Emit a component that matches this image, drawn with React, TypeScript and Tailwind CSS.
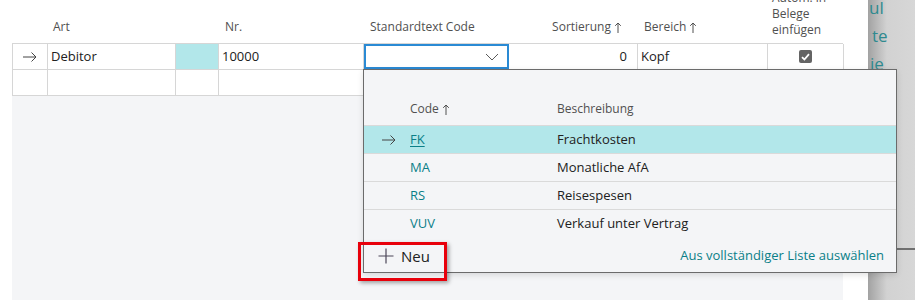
import React from "react";

const font = { fontFamily: '"Open Sans", "Noto Sans", sans-serif' };

const SortArrow = () => (
  <svg width="8" height="11" viewBox="0 0 8 11" className="ml-[3px] inline-block" fill="none" stroke="#505050" strokeWidth="1">
    <path d="M4 1v10M1.2 3.8 4 1l2.8 2.8" />
  </svg>
);

const RowArrow = () => (
  <svg width="14" height="10" viewBox="0 0 14 10" fill="none" stroke="#444" strokeWidth="1">
    <path d="M0 5h13M8.5 0.5 13 5l-4.5 4.5" />
  </svg>
);

interface Entry {
  code: string;
  text: string;
  active?: boolean;
}

const entries: Entry[] = [
  { code: "FK", text: "Frachtkosten", active: true },
  { code: "MA", text: "Monatliche AfA" },
  { code: "RS", text: "Reisespesen" },
  { code: "VUV", text: "Verkauf unter Vertrag" },
];

const Lookup = () => (
  <div className="absolute left-[363px] top-[69px] z-10 flex h-[204px] w-[534px] flex-col border border-[#6b6b6b] bg-[#f4f5f7] shadow-[0_2px_6px_rgba(0,0,0,0.12)]">
    <div className="flex h-[56px] items-end border-b border-[#dadada] pb-[7px] text-[12px] text-[#505050]">
      <div className="flex w-[193px] items-center pl-[46px]">
        Code
        <SortArrow />
      </div>
      <div>Beschreibung</div>
    </div>
    {entries.map((e, i) => (
      <div
        key={e.code}
        className={`flex h-[28px] items-center text-[13px] ${
          i < entries.length - 1 ? "border-b border-[#dadada]" : ""
        } ${e.active ? "bg-[#b2e7ea]" : ""}`}
      >
        <div className="flex w-[46px] justify-center pl-[4px]">{e.active && <RowArrow />}</div>
        <div className={`w-[147px] text-[#0a7f88] ${e.active ? "underline underline-offset-2" : ""}`}>{e.code}</div>
        <div className="text-[#212121]">{e.text}</div>
      </div>
    ))}
    <div className="flex flex-1 items-center justify-between pl-[14px] pr-[12px] pt-[2px]">
      <div className="flex items-center gap-[7px] text-[15px] text-[#212121]">
        <svg width="16" height="16" viewBox="0 0 16 16" fill="none" stroke="#4b4658" strokeWidth="1.2">
          <path d="M8 0.5v15M0.5 8h15" />
        </svg>
        Neu
      </div>
      <div className="text-[13px] text-[#0a7f88]">Aus vollständiger Liste auswählen</div>
    </div>
  </div>
);

export default function App() {
  const cell = "border-r border-[#d6d6d6] h-full flex items-center";
  return (
    <div className="flex h-[300px] w-[915px] overflow-hidden bg-white" style={font}>
      <div className="relative flex w-[868px] flex-col pl-3">
        {/* column headers */}
        <div className="grid h-[43px] grid-cols-[35px_128px_43px_145px_145px_129px_130px_76px] grid-rows-[43px] text-[12px] text-[#505050]">
          <div />
          <div className="flex items-end pb-[7px] pl-[6px]">Art</div>
          <div />
          <div className="flex items-end pb-[7px] pl-[7px]">Nr.</div>
          <div className="flex items-end pb-[7px] pl-[7px]">Standardtext Code</div>
          <div className="flex items-end justify-end pb-[7px] pr-[15px]">
            <span className="flex items-center">
              Sortierung
              <SortArrow />
            </span>
          </div>
          <div className="flex items-end pb-[7px] pl-[7px]">
            <span className="flex items-center">
              Bereich
              <SortArrow />
            </span>
          </div>
          <div className="flex min-h-0 items-end pb-[5px] pl-[5px] leading-[16px]">
            <div className="shrink-0">
              Autom. in
              <br />
              Belege
              <br />
              einfügen
            </div>
          </div>
        </div>

        {/* row 1 */}
        <div className="grid h-[26px] w-[831px] grid-cols-[35px_128px_43px_145px_145px_129px_130px_76px] border-l border-t border-[#d6d6d6] text-[13px] text-[#212121]">
          <div className={`${cell} justify-center`}>
            <RowArrow />
          </div>
          <div className={`${cell} pl-[3px]`}>Debitor</div>
          <div className={`${cell} bg-[#b2e7ea]`} />
          <div className={`${cell} pl-[3px]`}>10000</div>
          <div className="flex h-full items-center justify-end border-2 border-[#2a8ad4] pr-[8px]">
            <svg width="14" height="8" viewBox="0 0 14 8" fill="none" stroke="#5a5a5a" strokeWidth="1">
              <path d="M1 1l6 6 6-6" />
            </svg>
          </div>
          <div className={`${cell} justify-end pr-[10px]`}>0</div>
          <div className={`${cell} pl-[3px]`}>Kopf</div>
          <div className={`${cell} justify-center`}>
            <span className="flex h-[13px] w-[13px] items-center justify-center rounded-[2px] bg-[#646464]">
              <svg width="9" height="8" viewBox="0 0 9 8" fill="none" stroke="white" strokeWidth="1.8">
                <path d="M1 4.2 3.4 6.5 8 1.2" />
              </svg>
            </span>
          </div>
        </div>

        {/* row 2 */}
        <div className="grid h-[27px] w-[831px] grid-cols-[35px_128px_43px_145px_145px_129px_130px_76px] border-b border-l border-t border-[#d6d6d6]">
          <div className={cell} />
          <div className={cell} />
          <div className={cell} />
          <div className={cell} />
          <div className={cell} />
          <div className={cell} />
          <div className={cell} />
          <div className={cell} />
        </div>

        <div className="w-[831px] flex-1 bg-[#f4f5f7]" />

        <Lookup />

        {/* highlight around Neu */}
        <div className="absolute left-[358px] top-[242px] z-20 h-[39px] w-[89px] border-[3px] border-[#e8000b] shadow-[2px_2px_4px_rgba(0,0,0,0.35)]" />
      </div>

      {/* side panel behind overlay */}
      <div className="relative flex-1 bg-gradient-to-r from-[#a2a2a2] via-[#d2d2d2] via-40% to-[#d7d7d7] text-[17px] leading-[28px] text-[#2f8a8f]">
        <div className="-mt-[6px] pl-[1px]">ul</div>
        <div className="pl-[4px]">te</div>
        <div className="pl-[2px]">ie</div>
        <div className="absolute left-0 right-0 top-[248px] h-[2px] bg-[#707070]" />
      </div>
    </div>
  );
}
